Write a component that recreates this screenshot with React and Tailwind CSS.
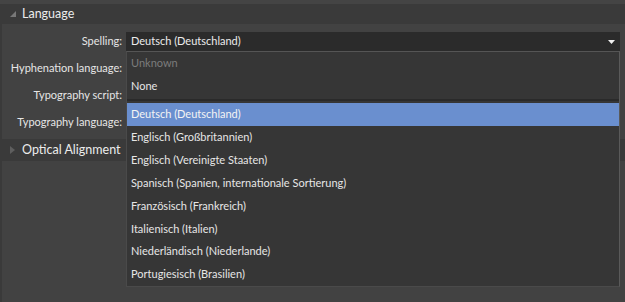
import React from "react";

const labels = [
  "Spelling:",
  "Hyphenation language:",
  "Typography script:",
  "Typography language:",
];

const languages = [
  "Englisch (Großbritannien)",
  "Englisch (Vereinigte Staaten)",
  "Spanisch (Spanien, internationale Sortierung)",
  "Französisch (Frankreich)",
  "Italienisch (Italien)",
  "Niederländisch (Niederlande)",
  "Portugiesisch (Brasilien)",
];

function SectionHeader({ title, open }) {
  return (
    <div className="flex h-[20px] items-center bg-[#3a3a3a]">
      <div className="flex w-[20px] justify-center pl-[2px]">
        {open ? (
          <svg width="6" height="6" viewBox="0 0 6 6">
            <path d="M6 0 L6 6 L0 6 Z" fill="#787878" />
          </svg>
        ) : (
          <svg width="5" height="8" viewBox="0 0 5 8">
            <path d="M0 0 L5 4 L0 8 Z" fill="#5e5e5e" />
          </svg>
        )}
      </div>
      <span className="whitespace-nowrap text-[12.5px] text-[#ececec]">{title}</span>
    </div>
  );
}

function Item({ children, muted, selected }) {
  return (
    <div
      className={
        "flex h-[23px] items-center whitespace-nowrap pl-[4px] text-[11px] " +
        (selected ? "bg-[#6a8fcf] text-[#f4f4f4]" : muted ? "text-[#7c7c7c]" : "text-[#e6e6e6]")
      }
    >
      {children}
    </div>
  );
}

export default function App() {
  return (
    <div
      className="relative h-[302px] w-[625px] overflow-hidden bg-[#424242]"
      style={{ fontFamily: 'Lato, "Noto Sans", sans-serif' }}
    >
      <div className="h-[4px] bg-[#444444]" />
      <div className="border-l-2 border-[#3a3a3a]">
        <SectionHeader title="Language" open />
        <div className="pt-[4px]">
          {labels.map((label, i) => (
            <div key={label} className="flex h-[27px] items-center">
              <div className="w-[122px] whitespace-nowrap pr-[2px] text-right text-[11px] text-[#e6e6e6]">{label}</div>
              {i === 0 && (
                <div className="ml-[2px] flex h-[20px] w-[494px] items-center justify-between bg-[#2b2b2b] pl-[5px] pr-[5px] text-[11px] text-[#ececec]">
                  <span>Deutsch (Deutschland)</span>
                  <svg width="7" height="4" viewBox="0 0 7 4">
                    <path d="M0 0 L7 0 L3.5 4 Z" fill="#f0f0f0" />
                  </svg>
                </div>
              )}
            </div>
          ))}
        </div>
        <div className="mt-[3px] flex h-[22px] items-center bg-[#3a3a3a]">
          <div className="flex w-[20px] justify-center">
            <svg width="5" height="8" viewBox="0 0 5 8">
              <path d="M0 0 L5 4 L0 8 Z" fill="#5e5e5e" />
            </svg>
          </div>
          <span className="whitespace-nowrap text-[12.5px] text-[#ececec]">Optical Alignment</span>
        </div>
        <div className="h-[200px]" />
      </div>

      <div className="absolute left-[126px] top-[51px] flex h-[236px] w-[494px] flex-col border border-[#4a4a4a] border-r-[#5a5a5a] border-t-[#555555] bg-[#363636]">
        <Item muted>Unknown</Item>
        <Item>None</Item>
        <div className="flex h-[5px] items-center">
          <div className="h-[2px] w-full bg-[#2a2a2a]" />
        </div>
        <Item selected>Deutsch (Deutschland)</Item>
        {languages.map((l) => (
          <Item key={l}>{l}</Item>
        ))}
      </div>
    </div>
  );
}
